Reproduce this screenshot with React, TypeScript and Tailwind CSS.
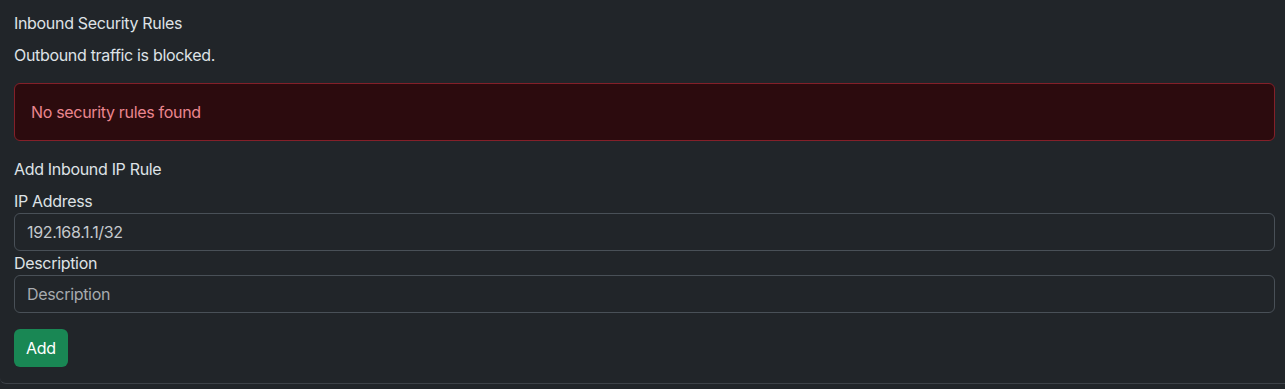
export default function App() {
  return (
    <div
      className="min-h-screen bg-[#212529] text-[#dee2e6] text-base leading-6 tracking-[-0.02em]"
      style={{ fontFamily: 'Inter, "Liberation Sans", Arial, sans-serif' }}
    >
      <div className="pl-[14px] pr-[10px] pt-[11px] pb-4 border-b border-[#3d4248] rounded-bl-md">
        <div className="mb-2">Inbound Security Rules</div>
        <p className="mb-4">Outbound traffic is blocked.</p>
        <div className="mb-4 rounded-md border border-[#842029] bg-[#2c0b0e] px-4 py-4 text-[#ea868f]">
          No security rules found
        </div>
        <div className="mb-2">Add Inbound IP Rule</div>
        <form onSubmit={(e) => e.preventDefault()}>
          <label className="block">IP Address</label>
          <input
            className="block w-full h-[38px] rounded-md border border-[#495057] bg-[#212529] px-3 text-[#c5c9cd] tracking-[-0.02em] outline-none"
            defaultValue="192.168.1.1/32"
          />
          <label className="block">Description</label>
          <input
            className="block w-full h-[38px] rounded-md border border-[#495057] bg-[#212529] px-3 text-[#dee2e6] tracking-[-0.02em] placeholder:text-[#a7abaf] outline-none"
            placeholder="Description"
          />
          <button
            type="submit"
            className="mt-4 h-[38px] rounded-md bg-[#198754] px-3 text-white tracking-[-0.02em]"
          >
            Add
          </button>
        </form>
      </div>
    </div>
  );
}
